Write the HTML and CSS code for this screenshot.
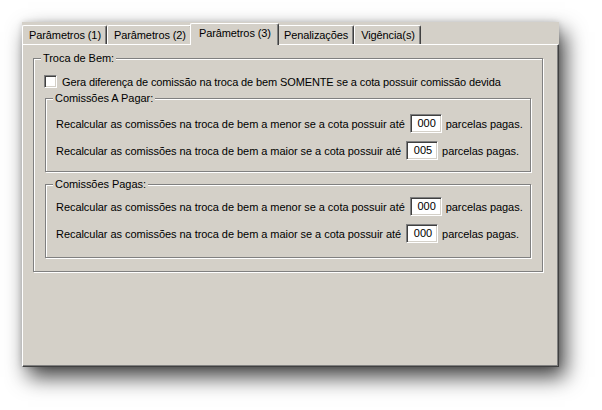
FILE: index.html
```html
<!DOCTYPE html>
<html lang="pt">
<head>
<meta charset="utf-8">
<title>Parâmetros</title>
<link rel="stylesheet" href="styles.css">
</head>
<body>
<div class="window">
  <div class="tabs">
    <div class="tab">Parâmetros (1)</div>
    <div class="tab">Parâmetros (2)</div>
    <div class="tab active">Parâmetros (3)</div>
    <div class="tab">Penalizações</div>
    <div class="tab">Vigência(s)</div>
  </div>
  <div class="page">
    <fieldset class="group outer">
      <legend>Troca de Bem:</legend>
      <label class="check"><span class="box"></span>Gera diferença de comissão na troca de bem SOMENTE se a cota possuir comissão devida</label>
      <fieldset class="group inner first">
        <legend>Comissões A Pagar:</legend>
        <div class="row"><span>Recalcular as comissões na troca de bem a menor se a cota possuir até</span><span class="field">000</span><span>parcelas pagas.</span></div>
        <div class="row"><span>Recalcular as comissões na troca de bem a maior se a cota possuir até</span><span class="field">005</span><span>parcelas pagas.</span></div>
      </fieldset>
      <fieldset class="group inner second">
        <legend>Comissões Pagas:</legend>
        <div class="row"><span>Recalcular as comissões na troca de bem a menor se a cota possuir até</span><span class="field">000</span><span>parcelas pagas.</span></div>
        <div class="row"><span>Recalcular as comissões na troca de bem a maior se a cota possuir até</span><span class="field">000</span><span>parcelas pagas.</span></div>
      </fieldset>
    </fieldset>
  </div>
</div>
</body>
</html>
```
FILE: styles.css
```css
* { box-sizing: border-box; }

html, body {
  margin: 0;
  background: #fff;
}

body {
  width: 602px;
  height: 410px;
  overflow: hidden;
  font-family: "Liberation Sans", Arial, sans-serif;
  font-size: 11px;
  letter-spacing: -0.05px;
  color: #000;
}

.window {
  margin: 22px 0 0 22px;
  width: 537px;
  height: 345px;
  background: #d4d0c8;
  display: flex;
  flex-direction: column;
  box-shadow: 6px 10px 20px rgba(0, 0, 0, 0.75), 0 0 6px rgba(0, 0, 0, 0.15);
}

.tabs {
  display: flex;
  align-items: flex-end;
  height: 22px;
  flex: none;
  letter-spacing: -0.1px;
}

.tab {
  height: 19px;
  padding: 1px 5px 0 6px;
  line-height: 17px;
  white-space: nowrap;
  background: #d4d0c8;
  border-top: 1px solid #fff;
  border-left: 1px solid #fff;
  border-right: 1px solid #404040;
  border-radius: 2px 2px 0 0;
  box-shadow: inset -1px 0 0 #808080;
}

.tab.active {
  position: relative;
  z-index: 1;
  height: 22px;
  margin: 0 -2px -1px;
  padding: 0 7px 0 8px;
  line-height: 18px;
}

.page {
  flex: 1;
  border-top: 1px solid #fff;
  border-left: 1px solid #fff;
  border-right: 1px solid #404040;
  border-bottom: 1px solid #404040;
  box-shadow: inset -1px -1px 0 #808080;
  padding: 7px 0 0 10px;
}

.group {
  margin: 0;
  padding: 0;
  min-width: 0;
  border: 1px solid #808080;
  box-shadow: inset 1px 1px 0 #fff, 1px 1px 0 #fff;
}

.group legend {
  margin-left: 7px;
  padding: 0 2px;
  line-height: 13px;
  background: #d4d0c8;
}

.outer {
  width: 510px;
  padding-bottom: 13px;
}

.check {
  display: flex;
  align-items: center;
  gap: 5px;
  margin: 10px 0 0 10px;
  height: 13px;
  letter-spacing: -0.12px;
}

.box {
  width: 13px;
  height: 13px;
  background: #fff;
  border-top: 1px solid #808080;
  border-left: 1px solid #808080;
  border-bottom: 1px solid #fff;
  border-right: 1px solid #fff;
  box-shadow: inset 1px 1px 0 #404040, inset -1px -1px 0 #d4d0c8;
}

.inner {
  width: 486px;
  margin-left: 11px;
}

.inner.first {
  margin-top: 4px;
  padding: 9px 0 11px 0;
}

.inner.second {
  margin-top: 6px;
  padding: 6px 0 14px 0;
}

.row {
  display: flex;
  align-items: center;
  height: 19px;
  padding-left: 10px;
  white-space: nowrap;
}

.row + .row {
  margin-top: 8px;
}

.field {
  width: 32px;
  height: 19px;
  margin: 0 4px 0 5px;
  padding-right: 5px;
  line-height: 17px;
  text-align: right;
  color: #000;
  background: #fff;
  border-top: 1px solid #808080;
  border-left: 1px solid #808080;
  border-bottom: 1px solid #fff;
  border-right: 1px solid #fff;
  box-shadow: inset 1px 1px 0 #404040, inset -1px -1px 0 #d4d0c8;
}
```
